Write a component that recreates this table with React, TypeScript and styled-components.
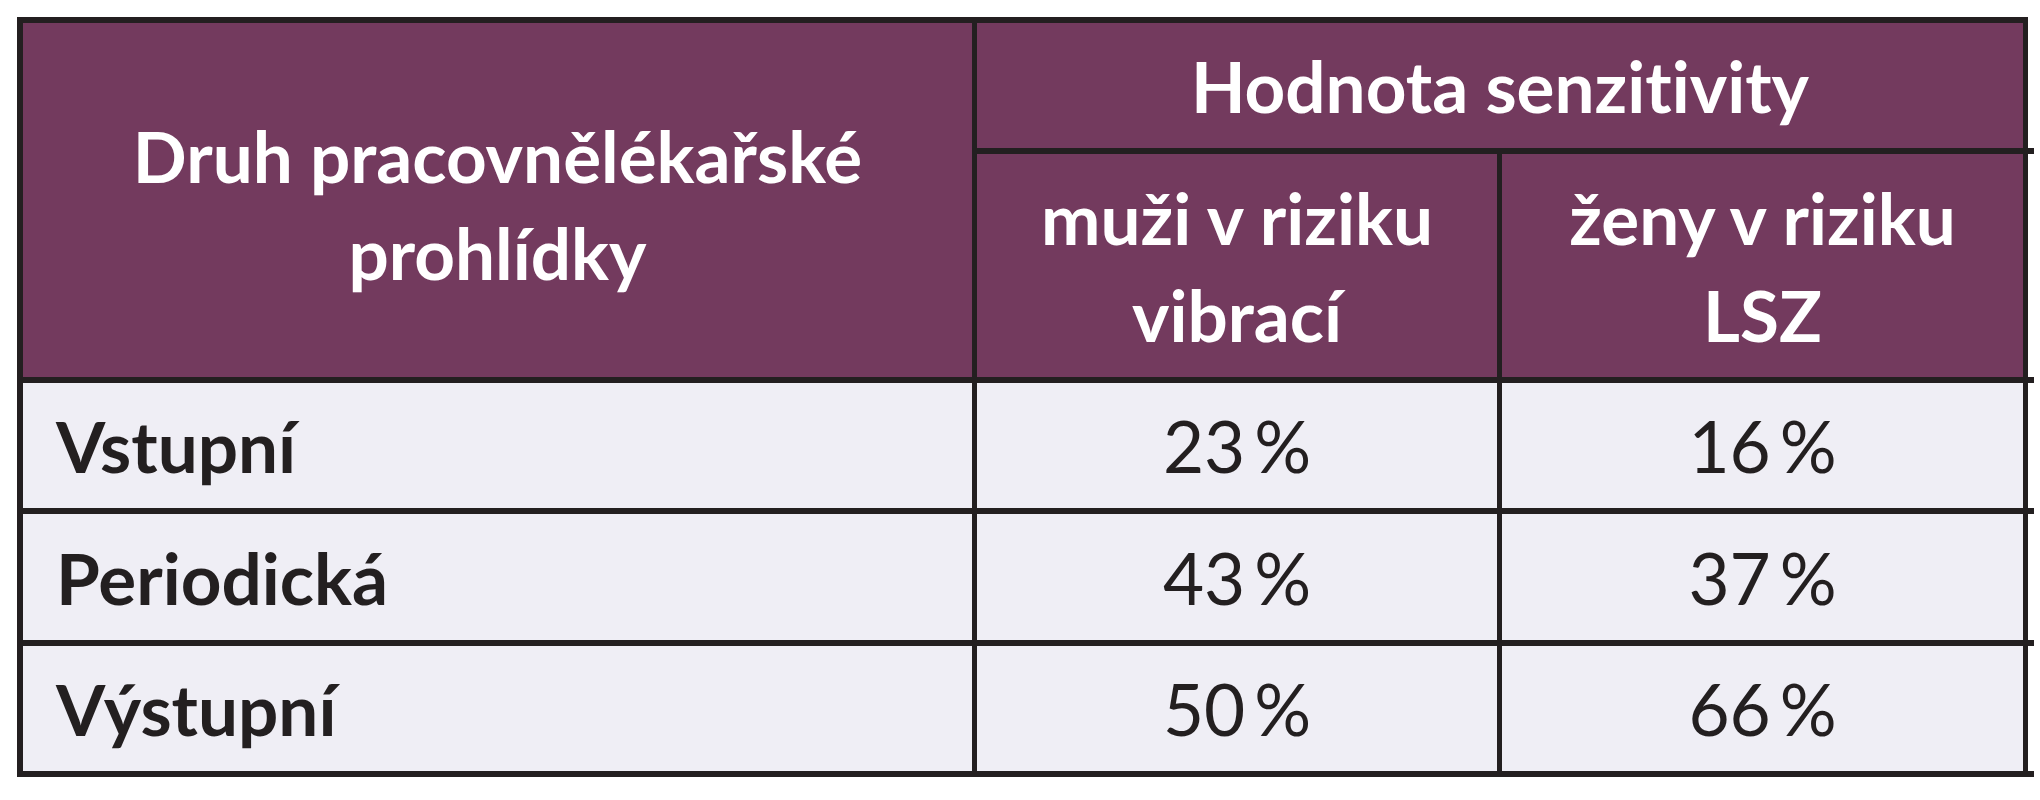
import React from "react";
import styled, { createGlobalStyle } from "styled-components";

const GlobalStyle = createGlobalStyle`
  html, body {
    margin: 0;
    padding: 0;
    background: #ffffff;
  }
  body {
    font-family: Lato, "Open Sans", "Liberation Sans", sans-serif;
  }
`;

const LINE = "#231f20";
const PURPLE = "#733a5e";
const BODY_BG = "#efeef5";

const Page = styled.div`
  padding: 17px;
`;

const Table = styled.div`
  display: grid;
  width: 2011px;
  box-sizing: border-box;
  grid-template-columns: 949px 520px 521px;
  grid-template-rows: 125px 223px 125px 126px 125px;
  gap: 6px 5px;
  padding: 6px 5px 6px 6px;
  background: ${LINE};
`;

const Cell = styled.div<{ $head?: boolean; $align?: "left" | "center"; $tick?: boolean; $bottomTick?: boolean }>`
  position: relative;
  display: flex;
  align-items: center;
  justify-content: ${(p) => (p.$align === "left" ? "flex-start" : "center")};
  text-align: ${(p) => (p.$align === "left" ? "left" : "center")};
  background: ${(p) => (p.$head ? PURPLE : BODY_BG)};
  color: ${(p) => (p.$head ? "#ffffff" : LINE)};
  font-family: Lato, "Open Sans", "Liberation Sans", sans-serif;
  font-size: 71px;
  line-height: 97px;
  font-variant-ligatures: none;
  font-feature-settings: "liga" 0, "clig" 0;
  box-sizing: border-box;
  ${(p) =>
    p.$tick &&
    `
    &::after {
      content: "";
      position: absolute;
      top: -6px;
      right: -11px;
      width: 6px;
      height: 6px;
      background: ${LINE};
    }
  `}
  ${(p) =>
    p.$bottomTick &&
    `
    &::before {
      content: "";
      position: absolute;
      bottom: -6px;
      right: -11px;
      width: 6px;
      height: 6px;
      background: ${LINE};
    }
  `}
`;

const KindHead = styled(Cell)`
  grid-column: 1;
  grid-row: 1 / span 2;
  font-weight: 700;
  padding-top: 8px;
`;

const GroupHead = styled(Cell)`
  grid-column: 2 / span 2;
  grid-row: 1;
  font-weight: 700;
`;

const SubHead = styled(Cell)`
  font-weight: 700;
`;

const RowLabel = styled(Cell)`
  font-weight: 700;
  padding-left: 33px;
`;

const Value = styled(Cell)`
  font-weight: 400;
`;

const rows = [
  { label: "Vstupní", men: "23", women: "16" },
  { label: "Periodická", men: "43", women: "37" },
  { label: "Výstupní", men: "50", women: "66" },
];

export default function App() {
  return (
    <>
      <GlobalStyle />
      <Page>
        <Table>
          <KindHead $head>
            Druh pracovnělékařské
            <br />
            prohlídky
          </KindHead>
          <GroupHead $head>Hodnota senzitivity</GroupHead>
          <SubHead $head>
            muži v riziku
            <br />
            vibrací
          </SubHead>
          <SubHead $head $tick>
            ženy v riziku
            <br />
            LSZ
          </SubHead>
          {rows.map((r, i) => (
            <React.Fragment key={r.label}>
              <RowLabel $align="left">{r.label}</RowLabel>
              <Value>{r.men}{"\u2009"}%</Value>
              <Value $tick $bottomTick={i === rows.length - 1}>
                {r.women}{"\u2009"}%
              </Value>
            </React.Fragment>
          ))}
        </Table>
      </Page>
    </>
  );
}
